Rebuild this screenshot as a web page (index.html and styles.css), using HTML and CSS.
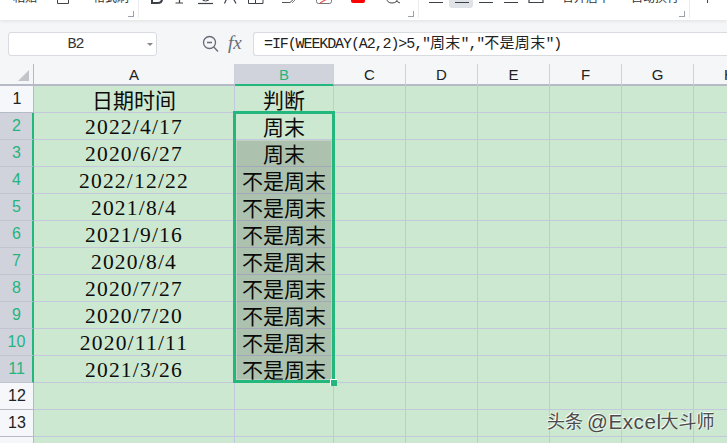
FILE: index.html
```html
<!DOCTYPE html>
<html lang="zh">
<head>
<meta charset="utf-8">
<title>WPS 表格</title>
<link rel="stylesheet" href="styles.css">
</head>
<body>
<div class="app">
  <div class="ribbon">
    <div class="group group-clip">
      <span class="rb-label label-paste">粘贴</span>
      <svg class="clip-icon" width="12" height="20" viewBox="0 0 12 20"><path d="M.5 -2V3.5H11.5V-2" fill="none" stroke="#444"/></svg>
      <span class="rb-label label-brush">格式刷</span>
      <span class="corner"></span>
    </div>
    <div class="group group-font">
      <svg width="279" height="20" viewBox="139 0 279 20" fill="none" stroke="#3c4048">
        <path d="M152 -3V3H158Q162 3 162 -1" stroke-width="2"/>
        <path d="M175.500 3H183M179.500 -2V3" stroke-width="1.200"/>
        <path d="M201.500 -2Q202 1 205.500 1Q209.500 1 210 -2"/>
        <path d="M198 3.500H213" stroke-width="1.200"/>
        <path d="M227 -2L224.500 3.500M233 -2L236 3.500" stroke-width="1.200"/>
        <path d="M248.500 -2V3.500H263V-2M255.500 -2V3.500"/>
        <path d="M282 2.500H290L294 -1" stroke="#555"/><path d="M292 3L296 -1" stroke="#888"/>
        <path d="M316.500 -2V1.500Q316.500 3.500 318.500 3.500H329.500Q331.500 3.500 331.500 1.500V-2" stroke="#777"/>
        <path d="M320 3L327 -1" stroke="#e0605a" stroke-width="1.300"/>
        <rect x="351" y="-3" width="14" height="6" rx="2" fill="#f00" stroke="none"/>
        <path d="M386.500 -2Q387 3 392 3Q397 3 398 -2" stroke="#444"/><path d="M396 1L400 3" stroke="#444"/>
      </svg>
      <span class="corner"></span>
    </div>
    <div class="group group-align">
      <svg class="align-icons" width="135" height="20" viewBox="419 0 135 20" fill="none" stroke="#3c4048" stroke-width="1.200">
        <rect x="449" y="-4" width="24" height="12" rx="3" fill="#dfe2e7" stroke="none"/>
        <path d="M429 2.500H443M455 2.500H469M479 2.500H493M504 2.500H518"/>
        <path d="M529 -2V2.500H543V-2"/>
      </svg>
      <span class="rb-label label-merge">合并居中</span>
      <span class="rb-label label-wrap">自动换行</span>
      <span class="corner"></span>
    </div>
    <div class="tick"></div>
  </div>

  <div class="formula-bar">
    <div class="name-box"><span class="name-text">B2</span><span class="name-arrow"></span></div>
    <svg class="zoom-icon" width="17" height="18" viewBox="0 0 17 18" fill="none" stroke="#666c78" stroke-width="1.300">
      <circle cx="7.500" cy="7.500" r="6"/><path d="M5 7.500H10M11.800 12L16 16.500"/>
    </svg>
    <span class="fx">fx</span>
    <div class="formula-box"><span class="mono">=IF(WEEKDAY(A2,2)&gt;5,"</span><span class="han">周末</span><span class="mono">","</span><span class="han">不是周末</span><span class="mono">")</span></div>
  </div>

  <div class="sheet">
    <div class="hd corner-cell"><span class="tri"></span></div>
    <div class="hd">A</div><div class="hd hd-on">B</div><div class="hd">C</div><div class="hd">D</div><div class="hd">E</div><div class="hd">F</div><div class="hd">G</div><div class="hd">H</div>

    <div class="rh">1</div><div class="c han-cell">日期时间</div><div class="c han-cell">判断</div><div class="c"></div><div class="c"></div><div class="c"></div><div class="c"></div><div class="c"></div><div class="c"></div>
    <div class="rh rh-on">2</div><div class="c date">2022/4/17</div><div class="c han-cell">周末</div><div class="c"></div><div class="c"></div><div class="c"></div><div class="c"></div><div class="c"></div><div class="c"></div>
    <div class="rh rh-on">3</div><div class="c date">2020/6/27</div><div class="c han-cell">周末</div><div class="c"></div><div class="c"></div><div class="c"></div><div class="c"></div><div class="c"></div><div class="c"></div>
    <div class="rh rh-on">4</div><div class="c date">2022/12/22</div><div class="c han-cell">不是周末</div><div class="c"></div><div class="c"></div><div class="c"></div><div class="c"></div><div class="c"></div><div class="c"></div>
    <div class="rh rh-on">5</div><div class="c date">2021/8/4</div><div class="c han-cell">不是周末</div><div class="c"></div><div class="c"></div><div class="c"></div><div class="c"></div><div class="c"></div><div class="c"></div>
    <div class="rh rh-on">6</div><div class="c date">2021/9/16</div><div class="c han-cell">不是周末</div><div class="c"></div><div class="c"></div><div class="c"></div><div class="c"></div><div class="c"></div><div class="c"></div>
    <div class="rh rh-on">7</div><div class="c date">2020/8/4</div><div class="c han-cell">不是周末</div><div class="c"></div><div class="c"></div><div class="c"></div><div class="c"></div><div class="c"></div><div class="c"></div>
    <div class="rh rh-on">8</div><div class="c date">2020/7/27</div><div class="c han-cell">不是周末</div><div class="c"></div><div class="c"></div><div class="c"></div><div class="c"></div><div class="c"></div><div class="c"></div>
    <div class="rh rh-on">9</div><div class="c date">2020/7/20</div><div class="c han-cell">不是周末</div><div class="c"></div><div class="c"></div><div class="c"></div><div class="c"></div><div class="c"></div><div class="c"></div>
    <div class="rh rh-on">10</div><div class="c date">2020/11/11</div><div class="c han-cell">不是周末</div><div class="c"></div><div class="c"></div><div class="c"></div><div class="c"></div><div class="c"></div><div class="c"></div>
    <div class="rh rh-on">11</div><div class="c date">2021/3/26</div><div class="c han-cell">不是周末</div><div class="c"></div><div class="c"></div><div class="c"></div><div class="c"></div><div class="c"></div><div class="c"></div>
    <div class="rh">12</div><div class="c"></div><div class="c"></div><div class="c"></div><div class="c"></div><div class="c"></div><div class="c"></div><div class="c"></div><div class="c"></div>
    <div class="rh">13</div><div class="c"></div><div class="c"></div><div class="c"></div><div class="c"></div><div class="c"></div><div class="c"></div><div class="c"></div><div class="c"></div>
    <div class="rh"></div><div class="c"></div><div class="c"></div><div class="c"></div><div class="c"></div><div class="c"></div><div class="c"></div><div class="c"></div><div class="c"></div>

    <div class="selection"><div class="shade"></div></div>
    <div class="handle"></div>
  </div>

  <div class="watermark"><span class="wm-han">头条</span><span class="wm-latin">@Excel</span><span class="wm-han">大斗师</span></div>
</div>
</body>
</html>
```
FILE: styles.css
```css
* { box-sizing: border-box; }
html, body { margin: 0; padding: 0; }
body { width: 727px; height: 443px; overflow: hidden; background: #f5f6f8; }
.app { position: relative; width: 727px; height: 443px; overflow: hidden; font-family: "Liberation Sans", "Noto Sans CJK SC", sans-serif; }

/* ribbon */
.ribbon { position: relative; z-index: 2; display: flex; height: 20px; background: #fff; box-shadow: 0 1px 4px rgba(0, 0, 0, .09); overflow: hidden; }
.group { position: relative; display: flex; align-items: flex-start; height: 18px; border-right: 1px solid #ececee; flex: none; }
.group-clip { width: 139px; padding-left: 13px; }
.group-font { width: 280px; }
.group-align { width: 271px; }
.rb-label { font: 12px/12px "Noto Sans CJK SC", sans-serif; color: #333; margin-top: -9px; white-space: nowrap; }
.clip-icon { margin-left: 20px; flex: none; }
.label-brush { margin-left: 24px; }
.align-icons { flex: none; margin-right: 8px; }
.label-wrap { margin-left: 21px; }
.corner { position: absolute; right: 4px; top: 11px; width: 6px; height: 6px; border-right: 1px solid #9aa0ac; border-bottom: 1px solid #9aa0ac; }
.tick { width: 1px; height: 3px; margin-left: 17px; background: #444; }

/* formula bar */
.formula-bar { display: flex; align-items: flex-start; height: 44px; padding: 12px 0 0 8px; background: #f5f6f8; }
.name-box { position: relative; display: flex; align-items: center; justify-content: center; width: 149px; height: 24px; background: #fff; border: 1px solid #d9dbe0; border-radius: 3px; padding-right: 14px; }
.name-text { font: 15px/22px "Liberation Mono", monospace; letter-spacing: -1px; color: #333; padding-top: 2px; }
.name-arrow { position: absolute; right: 3px; top: 10px; border-left: 3px solid transparent; border-right: 3px solid transparent; border-top: 3px solid #888; }
.zoom-icon { margin: 3px 0 0 45px; flex: none; }
.fx { width: 24px; margin-left: 9px; font: italic 19px/22px "Liberation Serif", serif; color: #666c78; }
.formula-box { flex: 1; height: 24px; margin-left: 1px; padding-left: 10px; background: #fff; border: 1px solid #d9dbe0; border-right: 0; border-radius: 3px 0 0 3px; line-height: 18px; white-space: nowrap; color: #222; }
.mono { font: 15px/18px "Liberation Mono", monospace; letter-spacing: -1.1px; }
.han { font: 15px/18px "Noto Sans CJK SC", sans-serif; letter-spacing: .3px; }

/* sheet */
.sheet { position: relative; display: grid; grid-template-columns: 34px 201px 99px repeat(6, 72px); grid-template-rows: 22px repeat(14, 27px); width: 766px; }
.hd { display: flex; align-items: center; justify-content: center; padding-top: 1px; background: #f5f6f8; border-right: 1px solid #cfd1da; border-bottom: 2px solid #b6b9c6; font-size: 15px; color: #222; }
.hd-on { background: #d0d3dc; color: #25b47e; border-bottom-color: #23b67d; }
.corner-cell { position: relative; border-right-color: #b6b9c6; }
.tri { position: absolute; left: 18px; top: 6px; width: 0; height: 0; border-left: 11px solid transparent; border-bottom: 11px solid #c2c4ca; }
.rh { display: flex; align-items: center; justify-content: center; padding-left: 1px; padding-bottom: 1px; background: #f6f7fa; border-right: 1px solid #b6b9c6; border-bottom: 1px solid #b6b9c6; font-size: 16px; color: #222; }
.rh-on { background: #d0d3dc; color: #25b47e; border-right: 2px solid #23b67d; border-bottom-color: #c2c5cf; }
.c { display: flex; align-items: center; justify-content: center; background: #cde8d0; border-right: 1px solid #c4c8dc; border-bottom: 1px solid #c4c8dc; color: #0c0c0c; white-space: nowrap; }
.date { font: 21.500px/26px "Liberation Serif", serif; letter-spacing: 1.200px; padding-top: 1px; }
.han-cell { font: 21px/26px "Noto Sans CJK SC", sans-serif; }

.selection { position: absolute; left: 233px; top: 47px; width: 102px; height: 272px; border: 3px solid #23b67d; }
.shade { height: 240px; margin-top: 26px; background: rgba(0, 0, 0, .16); border: 1px solid rgba(255, 255, 255, .25); }
.handle { position: absolute; left: 330px; top: 315px; width: 7px; height: 7px; background: #23b67d; border: 1px solid #fff; border-width: 1px 0 0 1px; }

.watermark { position: absolute; left: 547px; top: 409px; display: flex; align-items: center; height: 26px; color: #4b4b4b; text-shadow: -1px -1px 0 rgba(255, 255, 255, .85), 1px 1px 0 rgba(255, 255, 255, .35); white-space: nowrap; }
.wm-han { font-size: 18px; line-height: 26px; }
.wm-latin { font-size: 20.500px; line-height: 26px; letter-spacing: .6px; margin-left: 4px; margin-right: -1px; }
```
